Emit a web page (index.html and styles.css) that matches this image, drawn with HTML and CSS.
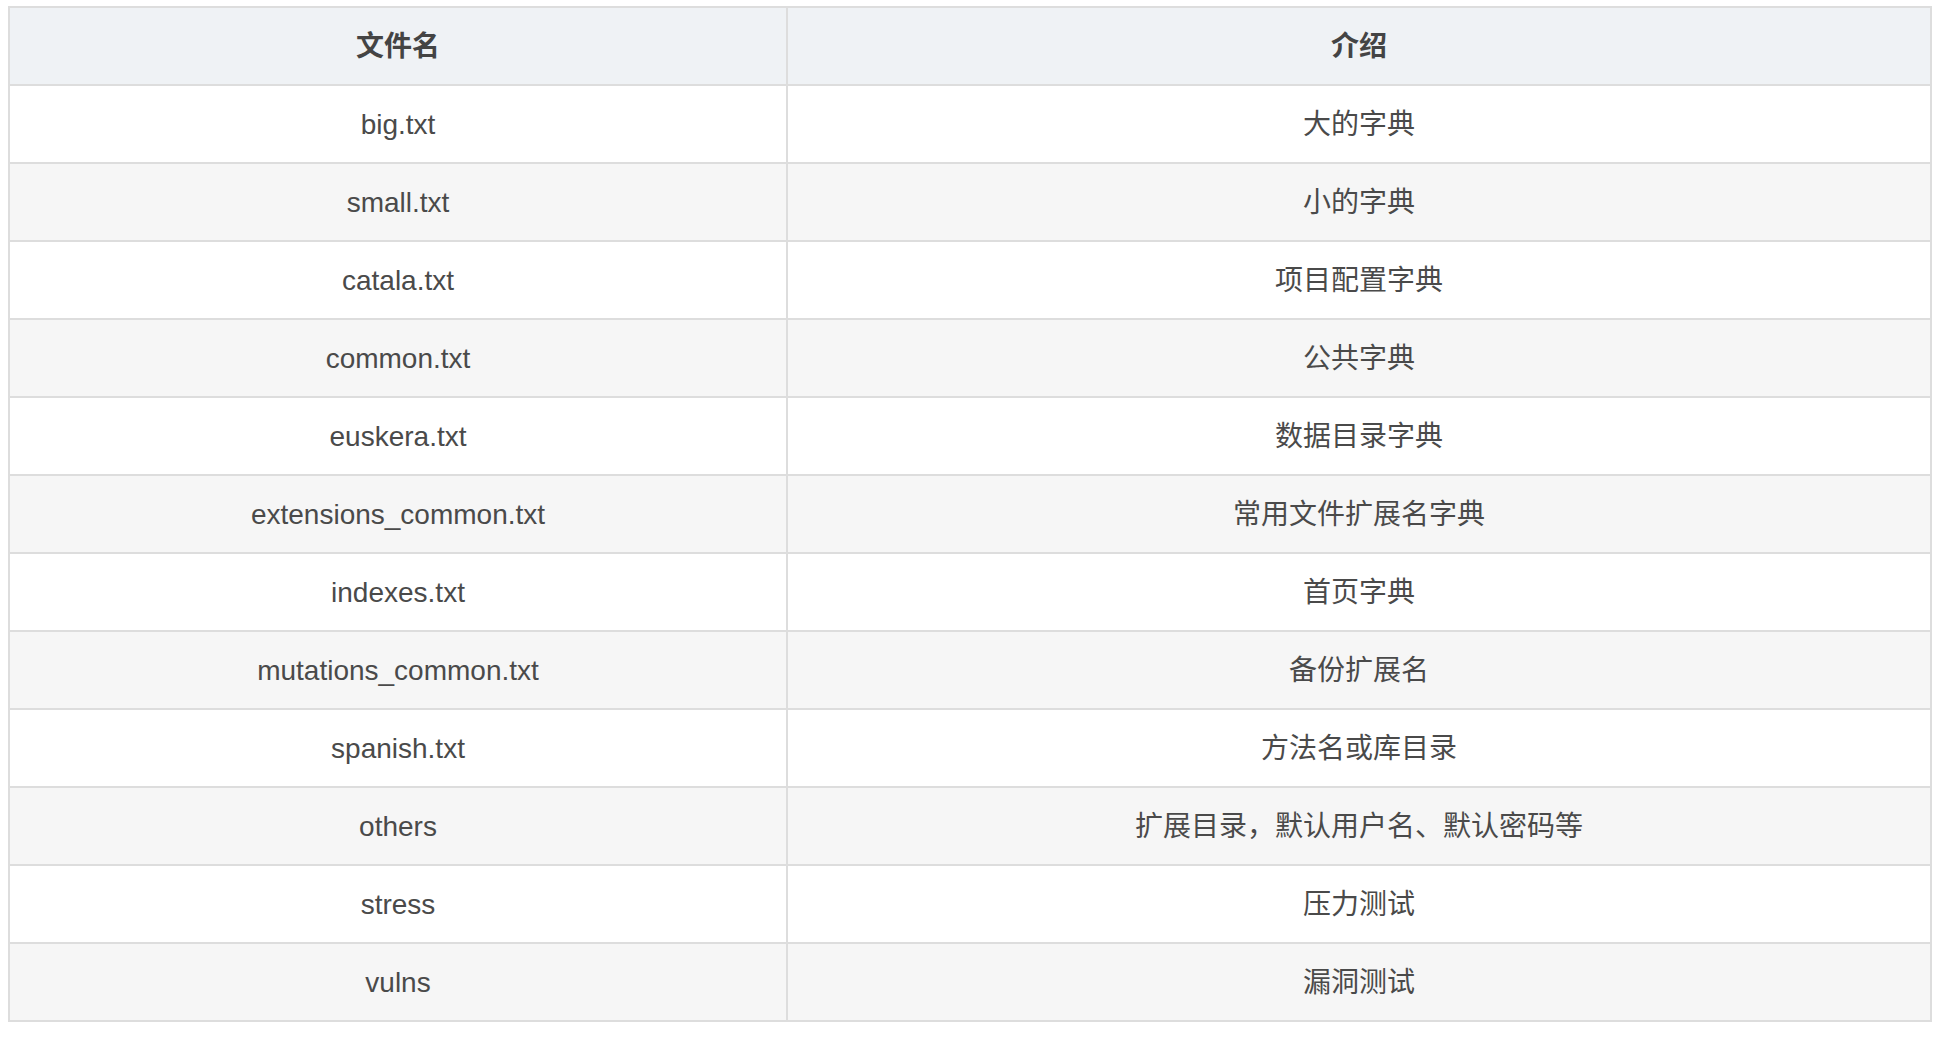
FILE: index.html
```html
<!DOCTYPE html>
<html lang="zh-CN">
<head>
<meta charset="utf-8">
<title>字典</title>
<link rel="stylesheet" href="styles.css">
</head>
<body>
<table class="dict-table">
  <thead>
    <tr><th class="col-name">文件名</th><th class="col-desc">介绍</th></tr>
  </thead>
  <tbody>
    <tr><td>big.txt</td><td>大的字典</td></tr>
    <tr><td>small.txt</td><td>小的字典</td></tr>
    <tr><td>catala.txt</td><td>项目配置字典</td></tr>
    <tr><td>common.txt</td><td>公共字典</td></tr>
    <tr><td>euskera.txt</td><td>数据目录字典</td></tr>
    <tr><td>extensions_common.txt</td><td>常用文件扩展名字典</td></tr>
    <tr><td>indexes.txt</td><td>首页字典</td></tr>
    <tr><td>mutations_common.txt</td><td>备份扩展名</td></tr>
    <tr><td>spanish.txt</td><td>方法名或库目录</td></tr>
    <tr><td>others</td><td>扩展目录，默认用户名、默认密码等</td></tr>
    <tr><td>stress</td><td>压力测试</td></tr>
    <tr><td>vulns</td><td>漏洞测试</td></tr>
  </tbody>
</table>
</body>
</html>
```

FILE: styles.css
```css
html, body {
  background: #ffffff;
}
body {
  margin: 6px 0 0 8px;
  font-family: "Liberation Sans", Arial, "Noto Sans CJK SC", sans-serif;
  font-size: 28px;
  color: #4a4a4a;
}
.dict-table {
  width: 1924px;
  border-collapse: separate;
  border-spacing: 0;
  border-top: 2px solid #dddddd;
  border-left: 2px solid #dddddd;
}
.dict-table th,
.dict-table td {
  border-right: 2px solid #dddddd;
  border-bottom: 2px solid #dddddd;
  padding: 18px 0 16px;
  line-height: 42px;
  height: 42px;
  text-align: center;
  white-space: nowrap;
}
.dict-table th {
  background: #eff2f5;
  font-weight: bold;
  color: #444444;
}
.dict-table .col-name {
  width: 776px;
}
.dict-table tbody tr:nth-child(odd) td {
  background: #ffffff;
}
.dict-table tbody tr:nth-child(even) td {
  background: #f6f6f6;
}
```
